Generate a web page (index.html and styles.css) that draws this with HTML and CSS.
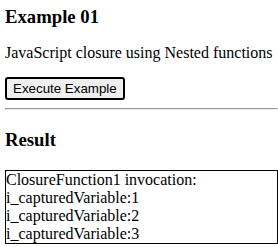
FILE: index.html
```html
<!DOCTYPE html>
<html lang="en">
<head>
    <meta charset="UTF-8">
    <title>Example 01</title>
    <link rel="stylesheet" href="styles.css">
</head>
<body>
    <h3 class="title">Example 01</h3>
    <p class="description">JavaScript closure using Nested functions</p>
    <input id="executeButton" type="button" value="Execute Example">
    <hr>
    <h3 class="result-title">Result</h3>
    <div id="result">ClosureFunction1 invocation:<br>i_capturedVariable:1<br>i_capturedVariable:2<br>i_capturedVariable:3</div>
</body>
</html>
```

FILE: styles.css
```css
body {
    font-family: "Liberation Serif", serif;
    margin: 0 0 0 5px;
}

.title {
    margin: 6px 0 16px 0;
}

.description {
    margin: 0 0 15px 0;
}

#executeButton {
    font-family: "Liberation Sans", sans-serif;
    font-size: 13.33px;
    background-color: #efefef;
    border: 2px solid black;
    border-radius: 3px;
    padding: 2px 6px;
    margin: 0;
}

hr {
    margin: 8px 0;
}

.result-title {
    margin: 19px 0 19px 0;
}

#result {
    border: 1px solid black;
    line-height: 18px;
}
```
